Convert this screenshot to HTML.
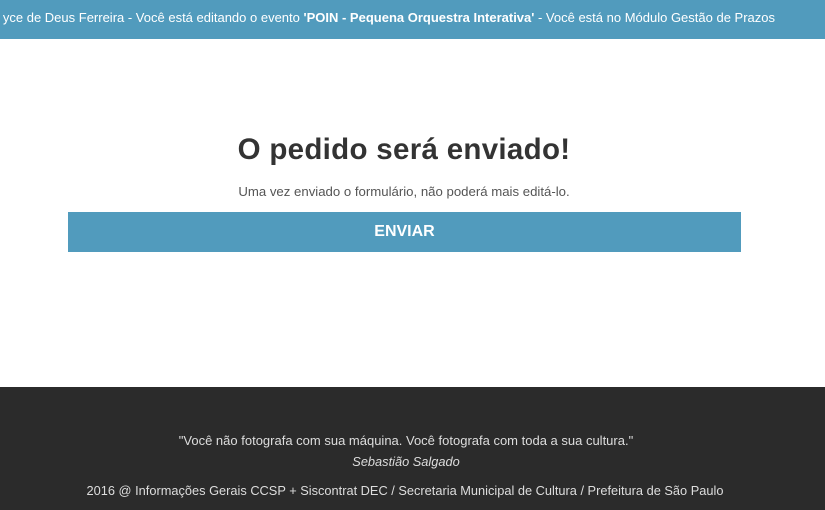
<!DOCTYPE html>
<html><head><meta charset="utf-8"><style>
body{margin:0;width:825px;height:510px;overflow:hidden;background:#fff;font-family:"Liberation Sans",sans-serif;position:relative}
.top{position:absolute;left:0;top:0;width:825px;height:39px;background:#519bbd;color:#fff;font-size:13px;}
.top span{position:absolute;right:50px;top:10px;white-space:nowrap;letter-spacing:0}
h1{position:absolute;left:0;width:808px;top:133px;margin:0;text-align:center;font-size:29.5px;color:#333;font-weight:bold;letter-spacing:0.3px}
.sub{position:absolute;left:0;width:808px;top:184px;text-align:center;font-size:13.2px;color:#555}
.btn{position:absolute;left:68px;top:212px;width:673px;height:40px;background:#519bbd;color:#fff;font-weight:bold;font-size:16px;text-align:center;line-height:40px}
.foot{position:absolute;left:0;top:387px;width:825px;height:123px;background:#2b2b2b;color:#ddd;font-size:12.8px;text-align:center}
</style></head><body>
<div class="top"><span>yce de Deus Ferreira - Você está editando o evento <b>'POIN - Pequena Orquestra Interativa'</b> - Você está no Módulo Gestão de Prazos</span></div>
<h1>O pedido será enviado!</h1>
<div class="sub">Uma vez enviado o formulário, não poderá mais editá-lo.</div>
<div class="btn">ENVIAR</div>
<div class="foot">
<div style="position:absolute;left:0;width:812px;top:46px;font-size:13px">"Você não fotografa com sua máquina. Você fotografa com toda a sua cultura."</div>
<div style="position:absolute;left:0;width:812px;top:67px;font-style:italic">Sebastião Salgado</div>
<div style="position:absolute;left:0;width:810px;top:96px">2016 @ Informações Gerais CCSP + Siscontrat DEC / Secretaria Municipal de Cultura / Prefeitura de São Paulo</div>
</div>
</body></html>
